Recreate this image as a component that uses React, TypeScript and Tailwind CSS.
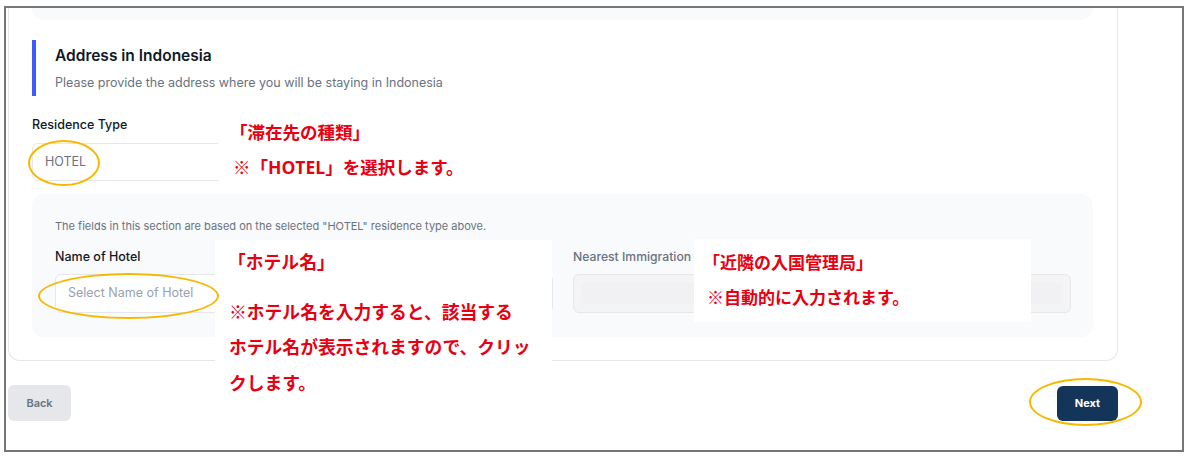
import * as React from "react"

const jp = { fontFamily: '"Noto Sans CJK JP", "Noto Sans", sans-serif' }

function Note({ className, children }: { className: string; children: React.ReactNode }) {
  return (
    <div className={"absolute flex flex-col bg-white font-bold text-[#e60012] " + className} style={jp}>
      {children}
    </div>
  )
}

function Ring({ className }: { className: string }) {
  return <div className={"absolute rounded-[50%] border-2 border-[#f7b900] " + className} />
}

export default function App() {
  return (
    <div
      className="relative w-[1190px] h-[462px] bg-white pt-[6px] pl-[4px] overflow-hidden"
      style={{ fontFamily: 'Inter, "Noto Sans", sans-serif' }}
    >
      <div className="w-[1180px] h-[446px] border-2 border-[#767676] overflow-hidden">
        <div className="ml-[2px] w-[1110px]">
          {/* Card */}
          <div className="border-x border-b border-gray-200 rounded-b-xl pl-[23px] pr-6 pb-[23px]">
            {/* end of previous section */}
            <div className="h-[12px] bg-gray-50 rounded-b-xl" />

            {/* Section heading */}
            <div className="mt-5 h-[56px] border-l-4 border-[#3d5afe] pl-[19px] pt-[6px]">
              <h2 className="text-[15.5px] leading-5 font-semibold text-gray-900">Address in Indonesia</h2>
              <p className="mt-[7px] text-[12.5px] leading-5 text-gray-500">
                Please provide the address where you will be staying in Indonesia
              </p>
            </div>

            {/* Residence type */}
            <div className="mt-[19px] grid grid-cols-2 gap-6">
              <div>
                <label className="block text-[12.5px] leading-5 font-medium text-gray-900">Residence Type</label>
                <div className="mt-2 h-[38px] flex items-center rounded-md border border-gray-200 bg-white px-3 text-[12.5px] text-gray-500">
                  HOTEL
                </div>
              </div>
            </div>

            {/* Type-specific fields */}
            <div className="mt-[13px] rounded-xl bg-gray-50 pl-[23px] pr-[22px] pt-6 pb-6">
              <p className="text-[11px] leading-4 text-gray-500">
                The fields in this section are based on the selected "HOTEL" residence type above.
              </p>
              <div className="mt-[13px] grid grid-cols-2 gap-5">
                <div>
                  <label className="block text-[12.5px] leading-5 font-medium text-gray-900">Name of Hotel</label>
                  <div className="mt-[7px] h-[39px] flex items-center rounded-md border border-gray-200 bg-white px-3 text-[12.5px] text-gray-400">
                    Select Name of Hotel
                  </div>
                </div>
                <div>
                  <label className="block whitespace-nowrap text-[12.2px] leading-5 font-medium text-gray-500">
                    Nearest Immigration
                  </label>
                  <div className="mt-[7px] h-[39px] rounded-md border border-gray-200 bg-[#f4f4f5] p-[8px]">
                    <div className="h-full rounded-sm bg-[#f1f1f3]" />
                  </div>
                </div>
              </div>
            </div>
          </div>

          {/* Footer buttons */}
          <div className="mt-6 flex items-center justify-between">
            <button className="h-[36px] w-[63px] rounded-md bg-gray-200 text-[11px] font-semibold text-gray-500">
              Back
            </button>
            <button className="h-[35px] w-[61px] rounded-md bg-[#14355a] text-[11px] font-bold text-white">
              Next
            </button>
          </div>
        </div>
      </div>

      {/* Annotations */}
      <Note className="left-[218px] top-[111px] w-[340px] h-[81px] pl-3 pt-[3px] text-[17.5px] leading-[35px]">
        <span>「滞在先の種類」</span>
        <span className="pl-[3px]">
          ※「<span style={{ fontFamily: '"Open Sans", sans-serif' }}>HOTEL</span>」を選択します。
        </span>
      </Note>

      <Note className="left-[215px] top-[240px] w-[337px] h-[155px] pl-[14px] pt-[4px] text-[17.8px] leading-[35.5px]">
        <span className="-ml-[1px] mb-[14px]">「ホテル名」</span>
        <span>※ホテル名を入力すると、該当する</span>
        <span>ホテル名が表示されますので、クリッ</span>
        <span>クします。</span>
      </Note>

      <Note className="left-[694px] top-[239px] w-[337px] h-[83px] pl-[13px] pt-[5px] text-[17px] leading-[35px]">
        <span className="-ml-[4px]">「近隣の入国管理局」</span>
        <span>※自動的に入力されます。</span>
      </Note>

      <Ring className="left-[28px] top-[140px] w-[72px] h-[46px]" />
      <Ring className="left-[38px] top-[273px] w-[181px] h-[46px]" />
      <Ring className="left-[1029px] top-[378px] w-[113px] h-[48px]" />
    </div>
  )
}
